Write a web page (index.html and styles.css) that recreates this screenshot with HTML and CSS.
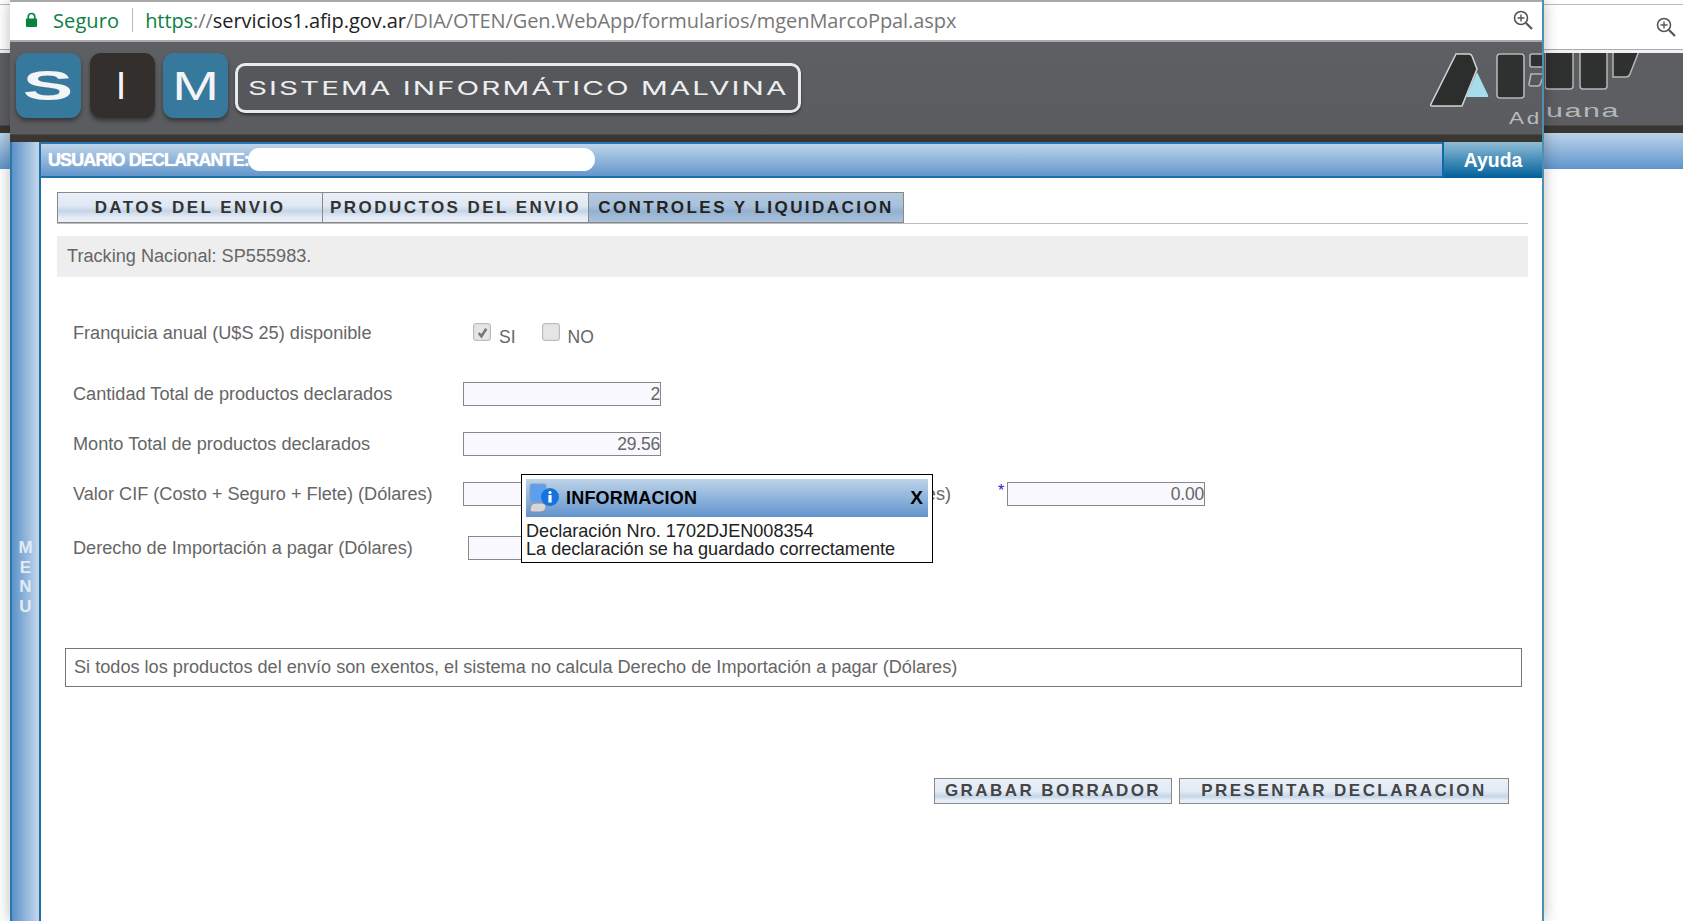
FILE: index.html
```html
<!DOCTYPE html>
<html lang="es">
<head>
<meta charset="utf-8">
<title>Sistema Informático Malvina</title>
<link rel="stylesheet" href="styles.css">
</head>
<body>
<div class="win-back">
  <div class="back-bar">
    <svg class="zoom-icon" viewBox="0 0 20 20"><circle cx="8" cy="8" r="6.5" fill="none" stroke="#555" stroke-width="1.6"/><path d="M8 4.5v7M4.5 8h7" stroke="#555" stroke-width="1.4"/><path d="M13 13l6 6" stroke="#555" stroke-width="2.2"/></svg>
  </div>
  <div class="back-gap"></div>
  <div class="back-head">
    <svg class="back-logo" viewBox="0 0 100 38"><path d="M0-2h28v35q0 3-3 3H3q-3 0-3-3zM35-2h27v35q0 3-3 3H38q-3 0-3-3z" fill="#2f3130" stroke="#b5b5b5" stroke-width="1.5"/><path d="M68-2h26l-9 23q-1 3-4 3H68z" fill="#2f3130" stroke="#b5b5b5" stroke-width="1.5"/></svg>
    <span class="back-brand">uana</span>
  </div>
  <div class="band"></div>
  <div class="back-blue"></div>
</div>

<div class="win-front">
  <div class="addr">
    <svg class="lock" viewBox="0 0 14 16"><path d="M3.5 7V4.5a3.5 3.5 0 0 1 7 0V7" fill="none" stroke="#0b8043" stroke-width="1.8"/><rect x="1" y="6.5" width="12" height="9" rx="1" fill="#0b8043"/></svg>
    <span class="secure">Seguro</span>
    <span class="addr-sep"></span>
    <span class="url"><span class="u-https">https</span><span class="u-path">://</span><span class="u-host">servicios1.afip.gov.ar</span><span class="u-path">/DIA/OTEN/Gen.WebApp/formularios/mgenMarcoPpal.aspx</span></span>
    <svg class="zoom-icon" viewBox="0 0 20 20"><circle cx="8" cy="8" r="6.5" fill="none" stroke="#555" stroke-width="1.6"/><path d="M8 4.5v7M4.5 8h7" stroke="#555" stroke-width="1.4"/><path d="M13 13l6 6" stroke="#555" stroke-width="2.2"/></svg>
  </div>
  <div class="head">
    <div class="tile tile-blue tile-first"><span class="tile-s">S</span></div>
    <div class="tile tile-dark"><span class="tile-i">I</span></div>
    <div class="tile tile-blue"><span class="tile-m">M</span></div>
    <div class="banner"><span class="banner-text">SISTEMA INFORMÁTICO MALVINA</span></div>
    <div class="afip">
      <svg class="afip-logo" viewBox="0 0 115 56"><path d="M26 1h13q2 0 3 2l5 13-15 37H2q-2 0-1-2z" fill="#2c2e2e" stroke="#d2d2d2" stroke-width="1.6"/><path d="M47 19l11 23q1 2-1 2H36z" fill="#a6dcec"/><rect x="67" y="1" width="27" height="44" rx="3" fill="#2f3130" stroke="#b5b5b5" stroke-width="1.6"/><rect x="100" y="1" width="20" height="13" rx="2" fill="#2f3130" stroke="#b5b5b5" stroke-width="1.6"/><path d="M101 21h13l-4 11q-1 1-3 1h-6q-2 0-2-2z" fill="#55575b" stroke="#b5b5b5" stroke-width="1.6"/></svg>
      <span class="afip-brand">Ad</span>
    </div>
  </div>
  <div class="band"></div>
  <div class="main">
    <div class="rail"><span>M</span><span>E</span><span>N</span><span>U</span></div>
    <div class="content">
      <div class="userbar">
        <span class="user-label">USUARIO DECLARANTE:</span>
        <span class="redact"></span>
        <span class="help">Ayuda</span>
      </div>
      <div class="tabs">
        <div class="tab tab-1">DATOS DEL ENVIO</div>
        <div class="tab tab-2">PRODUCTOS DEL ENVIO</div>
        <div class="tab tab-3">CONTROLES Y LIQUIDACION</div>
      </div>
      <div class="tracking">Tracking Nacional: SP555983.</div>
      <div class="form">
        <div class="row row-check">
          <span class="label">Franquicia anual (U$S 25) disponible</span>
          <span class="check checked"><svg viewBox="0 0 12 12"><path d="M2.5 6.5l2.5 3 4.5-7" fill="none" stroke="#777" stroke-width="2.4"/></svg></span>
          <span class="check-text">SI</span>
          <span class="check"></span>
          <span class="check-text">NO</span>
        </div>
        <div class="row row-a">
          <span class="label">Cantidad Total de productos declarados</span>
          <span class="field">2</span>
        </div>
        <div class="row row-b">
          <span class="label">Monto Total de productos declarados</span>
          <span class="field">29.56</span>
        </div>
        <div class="row row-b">
          <span class="label">Valor CIF (Costo + Seguro + Flete) (Dólares)</span>
          <span class="field"></span>
          <span class="label-right">es)</span>
          <span class="req">*</span>
          <span class="field">0.00</span>
        </div>
        <div class="row row-c">
          <span class="label label-wide">Derecho de Importación a pagar (Dólares)</span>
          <span class="field"></span>
        </div>
      </div>
      <div class="notice">Si todos los productos del envío son exentos, el sistema no calcula Derecho de Importación a pagar (Dólares)</div>
      <div class="actions">
        <span class="btn btn-a">GRABAR BORRADOR</span>
        <span class="btn btn-b">PRESENTAR DECLARACION</span>
      </div>
    </div>
  </div>
</div>

<div class="popup">
  <div class="popup-title">
    <svg class="popup-icon" viewBox="0 0 30 30"><rect x="1" y="1" width="16" height="18" rx="2" fill="#5aa0ef" stroke="#8e9db5"/><path d="M1 27q0-7 6-7h5q5 0 5 4t-5 5H4q-3 0-3-2z" fill="#d5d5dc" stroke="#8c8c96"/><circle cx="21" cy="14" r="9" fill="#1473dc"/><circle cx="21" cy="9.5" r="1.6" fill="#fff"/><rect x="19.4" y="12" width="3.2" height="7.5" fill="#fff"/></svg>
    <span class="popup-heading">INFORMACION</span>
    <span class="popup-close">X</span>
  </div>
  <div class="popup-body">Declaración Nro. 1702DJEN008354<br>La declaración se ha guardado correctamente</div>
</div>
</body>
</html>
```
FILE: styles.css
```css
* { box-sizing: border-box; }
html, body { margin: 0; height: 100%; }
body {
  width: 1683px; height: 921px; overflow: hidden; position: relative; background: #fff;
  font-family: "Liberation Sans", Arial, sans-serif; color: #666;
}
.win-back { position: absolute; inset: 0; display: flex; flex-direction: column; }
.back-bar {
  height: 46px; margin-top: 4px; background: #fff; border-top: 1px solid #bbb; border-bottom: 1px solid #aaa;
  display: flex; justify-content: flex-end; align-items: center; padding-right: 6px;
}
.back-gap { height: 3px; background: #f1f1f1; }
.back-head { height: 72px; background: #5c5e62; position: relative; overflow: hidden; }
.back-logo { position: absolute; left: 1545px; top: 0; width: 100px; height: 38px; }
.back-brand {
  position: absolute; left: 1546px; top: 47px; font-size: 19px; color: #b5b7ba; letter-spacing: 1px;
  transform: scaleX(1.6); transform-origin: left center;
}
.band { height: 8px; background: #3a3632; border-top: 1px solid #4b4845; }
.back-blue { height: 36px; background: linear-gradient(#bcd3e9, #6094cb); }

.win-front {
  position: absolute; left: 10px; top: 0; width: 1534px; height: 921px; background: #fff;
  display: flex; flex-direction: column; box-shadow: 0 0 14px rgba(0,0,0,.28);
  border-right: 2px solid #4f8fb4;
}
.addr {
  height: 42px; flex: none; background: #fff; border-top: 2px solid #a9a9a9; border-bottom: 2px solid #aaa;
  display: flex; align-items: center; padding: 0 8px 2px 15px;
}
.lock { width: 13px; height: 16px; margin-right: 15px; }
.secure { font: 20px "Open Sans", sans-serif; color: #0b8043; letter-spacing: .1px; }
.addr-sep { width: 1px; height: 24px; background: #bbb; margin: 0 12px 0 13px; }
.url { font: 20px "Open Sans", sans-serif; letter-spacing: -.07px; flex: 1; white-space: nowrap; }
.u-https { color: #0b8043; }
.u-path { color: #777; }
.u-host { color: #222; }
.zoom-icon { width: 20px; height: 20px; flex: none; margin-right: 1px; }

.head {
  height: 92px; flex: none; background: linear-gradient(#5d5f63, #5a5c60); display: flex; align-items: flex-start;
  padding: 11px 0 0 6px; overflow: hidden;
}
.tile {
  width: 65px; height: 65px; border-radius: 11px; margin-right: 8px; display: flex; align-items: center; justify-content: center;
  color: #f2f4f6; box-shadow: 0 3px 4px rgba(0,0,0,.4); overflow: hidden;
}
.tile-first { margin-right: 9px; }
.tile-blue { background: #37789d; }
.tile-dark { background: #332f2c; }
.tile-s { font-size: 42px; font-weight: 700; transform: scaleX(1.8); line-height: 1; }
.tile-i { font-size: 38px; font-weight: 400; line-height: 1; margin-right: 3px; }
.tile-m { font-size: 40px; font-weight: 400; transform: scaleX(1.4); line-height: 1; }
.banner {
  width: 566px; height: 50px; margin: 10px 0 0 -1px; border: 3px solid #e8eaec; border-radius: 10px; background: #55575b;
  box-shadow: 0 2px 3px rgba(0,0,0,.45); display: flex; align-items: center; justify-content: center;
}
.banner-text {
  font: 400 19px Inter, sans-serif; color: #eceef0; white-space: nowrap; letter-spacing: 1.3px;
  transform: scaleX(1.56);
}
.afip { margin-left: auto; width: 112px; height: 80px; position: relative; flex: none; }
.afip-logo { position: absolute; left: 0; top: 0; width: 115px; height: 56px; }
.afip-brand {
  position: absolute; left: 79px; top: 57px; font-size: 16px; color: #b8babc; letter-spacing: 2px;
  transform: scaleX(1.4); transform-origin: left center;
}

.main { flex: 1; display: flex; min-height: 0; }
.rail {
  width: 31px; flex: none; border-left: 2px solid #2b78ad; border-right: 2px solid #1d6fa6;
  background: linear-gradient(90deg, #5c91c8, #c4d8ec);
  display: flex; flex-direction: column; align-items: center; padding-top: 396px;
  font-size: 17px; font-weight: 700; color: #e2ebf4; line-height: 19.5px;
}
.content { flex: 1; min-width: 0; display: flex; flex-direction: column; }
.userbar {
  height: 36px; flex: none; border-top: 2px solid #2878ad; border-bottom: 2px solid #1d6fa6;
  background: linear-gradient(#bdd4ea, #6396cb); display: flex; align-items: center; padding-left: 7px;
}
.user-label {
  font-size: 18px; font-weight: 700; color: #fff; letter-spacing: -.9px; white-space: nowrap; width: 200px;
  text-shadow: 0 0 1px #fff;
}
.redact { width: 347px; height: 23px; background: #fff; border-radius: 12px; margin-top: -2px; }
.help {
  margin-left: auto; width: 100px; align-self: stretch; margin-top: -2px; margin-bottom: -2px;
  background: linear-gradient(#8fbcd6, #00609b); border-left: 2px solid #0f6ca6;
  color: #fff; font-weight: 700; font-size: 19.4px; display: flex; align-items: center; justify-content: center;
}
.tabs {
  margin: 14px 14px 0 16px; display: flex; height: 32px; border-bottom: 1px solid #bdbdbd; flex: none;
}
.tab {
  height: 31px; border: 1px solid #888; border-left-width: 0; display: flex; align-items: center; justify-content: center;
  font-size: 17px; font-weight: 700; letter-spacing: 2.45px; color: #333; white-space: nowrap;
  background: linear-gradient(#e9eff8 0%, #dfe8f3 45%, #c4d4e6 62%, #e6edf6 85%, #eaf0f8 100%);
}
.tab-1 { width: 266px; border-left-width: 1px; }
.tab-2 { width: 266px; }
.tab-3 { width: 315px; color: #222; background: linear-gradient(#b4c9e0 0%, #a8c0da 45%, #94b0d0 62%, #aac2dc 100%); }
.tracking {
  margin: 12px 14px 0 16px; height: 41px; flex: none; background: #eee; display: flex; align-items: center; padding-left: 10px;
  font-size: 18.15px; color: #666;
}
.form { padding: 46px 0 0 32px; flex: none; }
.row { display: flex; align-items: center; height: 24px; font-size: 18.15px; white-space: nowrap; }
.row-check { height: 20px; }
.row-a { margin-top: 39px; }
.row-b { margin-top: 26px; }
.row-c { margin-top: 30px; }
.label { width: 390px; flex: none; }
.label-wide { width: 395px; }
.check {
  width: 18px; height: 18px; border: 1px solid #bbb; border-radius: 3px; background: #e6e6e6; margin: -2px 0 0 10px; flex: none;
  display: flex; align-items: center; justify-content: center; box-shadow: inset 0 0 2px #ccc;
}
.check svg { width: 13px; height: 13px; }
.check-text { margin: 7px 16px 0 8px; line-height: 20px; font-size: 17.5px; }
.field {
  width: 198px; height: 24px; flex: none; border: 1px solid #888; background: #f9f8ff; text-align: right;
  font-size: 17.5px; line-height: 22px; letter-spacing: -.2px; color: #666;
}
.label-right { width: 290px; flex: none; text-align: right; }
.req { margin-left: 47px; width: 9px; color: #22c; font-size: 16px; flex: none; align-self: flex-start; }
.notice {
  margin: 88px 20px 0 24px; height: 39px; flex: none; border: 1px solid #777; display: flex; align-items: center; padding-left: 8px;
  font-size: 18.15px; color: #666; white-space: nowrap;
}
.actions { margin: 91px 33px 0 0; display: flex; justify-content: flex-end; gap: 7px; flex: none; }
.btn {
  height: 26px; border: 1px solid #888; display: flex; align-items: center; justify-content: center;
  font-size: 17px; font-weight: 700; letter-spacing: 2.45px; color: #444; white-space: nowrap;
  background: linear-gradient(#eaf0f8 0%, #e4ebf5 50%, #c6d6e8 72%, #e8eef7 90%);
}
.btn-a { width: 238px; }
.btn-b { width: 330px; }

.popup {
  position: absolute; left: 521px; top: 474px; width: 412px; height: 89px; background: #fff; border: 1px solid #000; padding: 4px 4px 0 4px;
}
.popup-title {
  height: 38px; background: linear-gradient(#bed4e9, #6193cd); display: flex; align-items: center; padding-left: 3px;
  color: #000; font-weight: 700; font-size: 18px;
}
.popup-icon { width: 30px; height: 30px; flex: none; }
.popup-heading { margin-left: 7px; letter-spacing: .2px; }
.popup-close { margin-left: auto; width: 23px; text-align: center; font-size: 19px; }
.popup-body { font-size: 18.1px; line-height: 18px; color: #222; padding-top: 5px; white-space: nowrap; }
```
